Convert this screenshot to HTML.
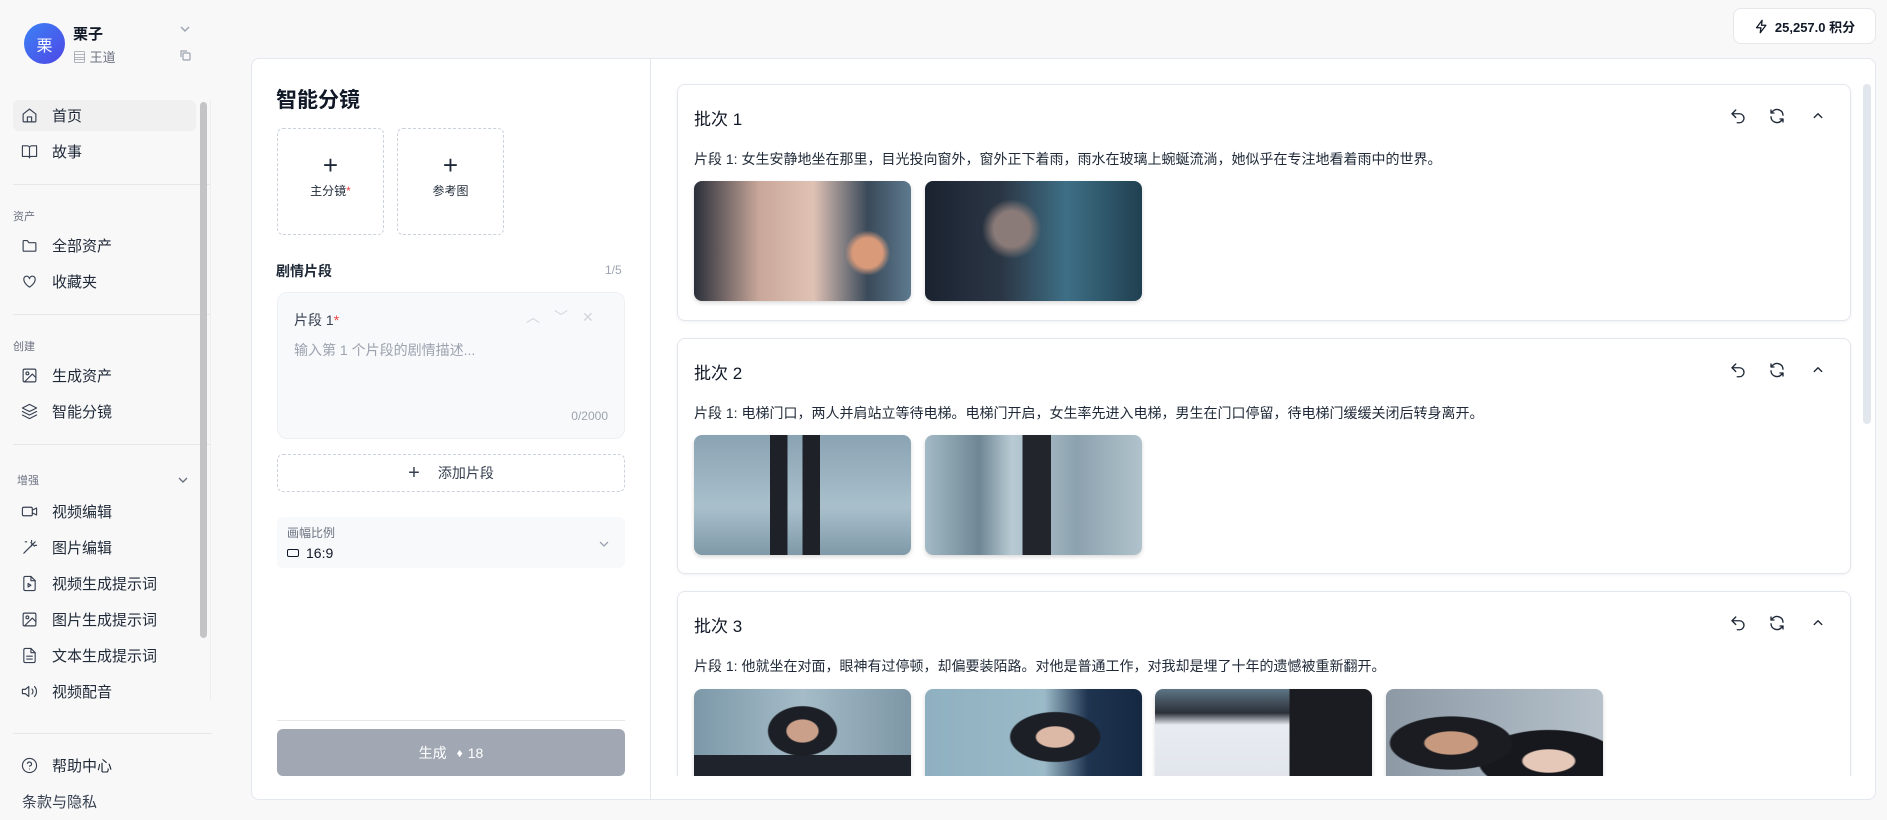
<!DOCTYPE html>
<html style="overflow:hidden;width:1887px;height:820px"><head><meta charset="utf-8"><style>
*{box-sizing:border-box;margin:0;padding:0}
body{width:1887px;height:820px;overflow:hidden;background:#f8f8f9;font-family:"Liberation Sans","Noto Sans CJK SC",sans-serif;color:#1f2937;position:relative}
.abs{position:absolute}
.nav{position:absolute;left:13px;width:183px;height:31px;display:flex;align-items:center;font-size:15px;color:#1f2937}
.nav svg{margin-left:8px;margin-right:14px;width:17px;height:17px;fill:none;stroke:#374151;stroke-width:1.6;stroke-linecap:round;stroke-linejoin:round}
.sec{position:absolute;left:13px;font-size:11px;color:#6b7280}
.sep{position:absolute;left:13px;width:198px;height:1px;background:#e5e7eb}
.card{position:absolute;left:677px;width:1174px;background:#fff;border:1px solid #e3e7ee;border-radius:8px;box-shadow:0 1px 3px rgba(0,0,0,.06)}
.ct{position:absolute;left:16px;top:20px;font-size:17px;color:#111827}
.cs{position:absolute;left:16px;top:64px;font-size:14px;color:#1f2937}
.ic{position:absolute;top:22px;width:18px;height:18px;fill:none;stroke:#1f2937;stroke-width:1.8;stroke-linecap:round;stroke-linejoin:round}
.img{position:absolute;width:217px;height:120px;border-radius:8px;box-shadow:0 2px 4px rgba(0,0,0,.15);overflow:hidden}
</style></head><body>
<div class="abs" style="left:24px;top:23px;width:41px;height:41px;border-radius:50%;background:linear-gradient(135deg,#3b82f6,#4f46e5);color:#fff;font-size:16px;display:flex;align-items:center;justify-content:center">栗</div>
<div class="abs" style="left:73px;top:23px;font-size:15px;font-weight:bold;color:#111827">栗子</div>
<div class="abs" style="left:73px;top:47px;font-size:13px;color:#6b7280">▤ 王道</div>
<svg class="abs" style="left:179px;top:23px" width="12" height="12" viewBox="0 0 12 12" fill="none" stroke="#9ca3af" stroke-width="1.4"><path d="M2 4l4 4 4-4"/></svg>
<svg class="abs" style="left:179px;top:49px" width="12" height="12" viewBox="0 0 12 12" fill="none" stroke="#9ca3af" stroke-width="1.2"><rect x="4" y="4" width="7" height="7" rx="1"/><path d="M2 8V2h6"/></svg>

<div class="nav" style="top:100px;background:#f0f0f1;border-radius:6px"><svg viewBox="0 0 24 24"><path d="M3 10l9-7 9 7v10a1 1 0 01-1 1H4a1 1 0 01-1-1z"/><path d="M9 21v-7h6v7"/></svg>首页</div>
<div class="nav" style="top:136px"><svg viewBox="0 0 24 24"><path d="M2 4h7a3 3 0 013 3v14a2 2 0 00-2-2H2zM22 4h-7a3 3 0 00-3 3v14a2 2 0 012-2h8z"/></svg>故事</div>
<div class="sep" style="top:184px"></div>
<div class="sec" style="top:208px">资产</div>
<div class="nav" style="top:230px"><svg viewBox="0 0 24 24"><path d="M3 6a1 1 0 011-1h5l2 3h9a1 1 0 011 1v10a1 1 0 01-1 1H4a1 1 0 01-1-1z"/></svg>全部资产</div>
<div class="nav" style="top:266px"><svg viewBox="0 0 24 24"><path d="M12 20s-8-5-8-11a4 4 0 018-1 4 4 0 018 1c0 6-8 11-8 11z"/></svg>收藏夹</div>
<div class="sep" style="top:314px"></div>
<div class="sec" style="top:338px">创建</div>
<div class="nav" style="top:360px"><svg viewBox="0 0 24 24"><rect x="3" y="3" width="18" height="18" rx="2"/><circle cx="9" cy="9" r="2"/><path d="M21 15l-5-5L5 21"/></svg>生成资产</div>
<div class="nav" style="top:396px"><svg viewBox="0 0 24 24"><path d="M12 2l10 5-10 5L2 7z"/><path d="M2 12l10 5 10-5M2 17l10 5 10-5"/></svg>智能分镜</div>
<div class="sep" style="top:444px"></div>
<div class="sec" style="top:472px;left:17px">增强</div>
<svg class="abs" style="left:177px;top:474px" width="12" height="12" viewBox="0 0 12 12" fill="none" stroke="#6b7280" stroke-width="1.4"><path d="M2 4l4 4 4-4"/></svg>
<div class="nav" style="top:496px"><svg viewBox="0 0 24 24"><rect x="2" y="6" width="14" height="12" rx="2"/><path d="M16 10l6-3v10l-6-3"/></svg>视频编辑</div>
<div class="nav" style="top:532px"><svg viewBox="0 0 24 24"><path d="M4 20L20 4M15 4V2M15 10V8M20 9h2M8 4H6M14 5l5 5"/></svg>图片编辑</div>
<div class="nav" style="top:568px"><svg viewBox="0 0 24 24"><path d="M14 2H6a2 2 0 00-2 2v16a2 2 0 002 2h12a2 2 0 002-2V8z"/><path d="M14 2v6h6M10 12l4 2.5-4 2.5z"/></svg>视频生成提示词</div>
<div class="nav" style="top:604px"><svg viewBox="0 0 24 24"><rect x="3" y="3" width="18" height="18" rx="2"/><circle cx="9" cy="9" r="2"/><path d="M21 15l-5-5L5 21"/></svg>图片生成提示词</div>
<div class="nav" style="top:640px"><svg viewBox="0 0 24 24"><path d="M14 2H6a2 2 0 00-2 2v16a2 2 0 002 2h12a2 2 0 002-2V8z"/><path d="M14 2v6h6M8 13h8M8 17h8"/></svg>文本生成提示词</div>
<div class="nav" style="top:676px"><svg viewBox="0 0 24 24"><path d="M11 5L6 9H2v6h4l5 4z"/><path d="M15.5 8.5a5 5 0 010 7M19 5a10 10 0 010 14"/></svg>视频配音</div>
<div class="abs" style="left:200px;top:102px;width:7px;height:536px;background:#c4c4c6;border-radius:4px"></div>
<div class="abs" style="left:210px;top:100px;width:1px;height:600px;background:#eceef1"></div>
<div class="sep" style="top:733px;width:199px"></div>
<div class="nav" style="top:750px"><svg viewBox="0 0 24 24"><circle cx="12" cy="12" r="10"/><path d="M9.1 9a3 3 0 015.8 1c0 2-3 3-3 3M12 17h.01"/></svg>帮助中心</div>
<div class="abs" style="left:22px;top:791px;font-size:15px;color:#374151">条款与隐私</div>

<div class="abs" style="left:1733px;top:8px;width:143px;height:36px;background:#fff;border:1px solid #e5e7eb;border-radius:8px;display:flex;align-items:center;justify-content:center;font-size:13px;font-weight:bold;color:#111827"><svg width="15" height="15" viewBox="0 0 24 24" fill="none" stroke="#111827" stroke-width="2" stroke-linejoin="round" style="margin-right:6px"><path d="M13 2L4 14h7l-1 8 9-12h-7z"/></svg>25,257.0 积分</div>

<div class="abs" style="left:251px;top:58px;width:1625px;height:742px;background:#fff;border:1px solid #e3e7ee;border-radius:8px;overflow:hidden"></div>
<div class="abs" style="left:650px;top:58px;width:1px;height:742px;background:#e3e7ee"></div>
<div class="abs" style="left:276px;top:84px;font-size:21px;font-weight:bold;color:#111827">智能分镜</div>
<div class="abs" style="left:277px;top:128px;width:107px;height:107px;border:1px dashed #cbd2dc;border-radius:6px;text-align:center"><div style="font-size:26px;margin-top:23px;line-height:26px;font-weight:300">+</div><div style="font-size:12px;margin-top:4px">主分镜<span style="color:#ef4444">*</span></div></div>
<div class="abs" style="left:397px;top:128px;width:107px;height:107px;border:1px dashed #cbd2dc;border-radius:6px;text-align:center"><div style="font-size:26px;margin-top:23px;line-height:26px;font-weight:300">+</div><div style="font-size:12px;margin-top:4px">参考图</div></div>
<div class="abs" style="left:276px;top:261px;font-size:14px;font-weight:bold;color:#1f2937">剧情片段</div>
<div class="abs" style="left:605px;top:263px;font-size:12px;color:#9ca3af">1/5</div>
<div class="abs" style="left:277px;top:292px;width:348px;height:147px;background:#f8f9fb;border:1px solid #eef0f3;border-radius:10px">
<div class="abs" style="left:16px;top:17px;font-size:14px;color:#374151">片段 1<span style="color:#ef4444">*</span></div>
<div class="abs" style="left:248px;top:14px;font-size:14px;color:#d1d5db;letter-spacing:14px">︿﹀✕</div>
<div class="abs" style="left:16px;top:47px;font-size:14px;color:#9ca3af">输入第 1 个片段的剧情描述...</div>
<div class="abs" style="right:16px;top:116px;font-size:12px;color:#9ca3af">0/2000</div>
</div>
<div class="abs" style="left:277px;top:454px;width:348px;height:38px;border:1px dashed #cbd2dc;border-radius:6px;display:flex;align-items:center;justify-content:center;font-size:14px;color:#374151"><span style="font-size:20px;margin-right:18px;font-weight:300">+</span>添加片段</div>
<div class="abs" style="left:277px;top:517px;width:348px;height:51px;background:#f8f9fb;border-radius:6px">
<div class="abs" style="left:10px;top:7px;font-size:12px;color:#6b7280">画幅比例</div>
<div class="abs" style="left:10px;top:28px;font-size:14px;color:#111827;display:flex;align-items:center"><span style="display:inline-block;width:12px;height:8px;border:1.3px solid #111827;border-radius:2px;margin-right:7px"></span>16:9</div>
<svg class="abs" style="left:321px;top:21px" width="12" height="12" viewBox="0 0 12 12" fill="none" stroke="#9ca3af" stroke-width="1.3"><path d="M2 4l4 4 4-4"/></svg>
</div>
<div class="abs" style="left:277px;top:720px;width:348px;height:1px;background:#e5e7eb"></div>
<div class="abs" style="left:277px;top:729px;width:348px;height:47px;background:#a1a8b3;border-radius:6px;display:flex;align-items:center;justify-content:center;color:#fff;font-size:14px">生成 <span style="margin:0 5px 0 10px;font-size:12px">♦</span>18</div>

<div class="abs" style="left:651px;top:59px;width:1224px;height:717px;overflow:hidden">
<div style="position:absolute;left:-651px;top:-59px;width:1887px;height:776px">
<div class="card" style="top:84px;height:237px">
<div class="ct">批次 1</div>
<svg class="ic" style="left:1051px" viewBox="0 0 24 24"><path d="M9 14L4 9l5-5"/><path d="M4 9h10a6 6 0 010 12h-3"/></svg>
<svg class="ic" style="left:1090px" viewBox="0 0 24 24"><path d="M20 11a8 8 0 00-14-5l-2 2M4 4v4h4M4 13a8 8 0 0014 5l2-2M20 20v-4h-4"/></svg>
<svg class="ic" style="left:1131px" viewBox="0 0 24 24"><path d="M7 14l5-5 5 5"/></svg>
<div class="cs">片段 1: 女生安静地坐在那里，目光投向窗外，窗外正下着雨，雨水在玻璃上蜿蜒流淌，她似乎在专注地看着雨中的世界。</div>
<div class="img" style="left:16px;top:96px;background:radial-gradient(circle at 80% 60%,#d99a7a 0 8%,transparent 12%),linear-gradient(90deg,#2a2f3a 0%,#c9a79a 30%,#e0c2b5 55%,#3a4a5a 80%,#5d7a8e 100%)"></div>
<div class="img" style="left:247px;top:96px;background:radial-gradient(circle at 40% 40%,#8a7b78 0 12%,transparent 20%),linear-gradient(90deg,#1a2230 0%,#2b3644 35%,#3e6f86 65%,#204050 100%)"></div>
</div>
<div class="card" style="top:338px;height:236px">
<div class="ct">批次 2</div>
<svg class="ic" style="left:1051px" viewBox="0 0 24 24"><path d="M9 14L4 9l5-5"/><path d="M4 9h10a6 6 0 010 12h-3"/></svg>
<svg class="ic" style="left:1090px" viewBox="0 0 24 24"><path d="M20 11a8 8 0 00-14-5l-2 2M4 4v4h4M4 13a8 8 0 0014 5l2-2M20 20v-4h-4"/></svg>
<svg class="ic" style="left:1131px" viewBox="0 0 24 24"><path d="M7 14l5-5 5 5"/></svg>
<div class="cs">片段 1: 电梯门口，两人并肩站立等待电梯。电梯门开启，女生率先进入电梯，男生在门口停留，待电梯门缓缓关闭后转身离开。</div>
<div class="img" style="left:16px;top:96px;background:linear-gradient(90deg,transparent 35%,#1e2228 35% 43%,transparent 43% 50%,#1e2228 50% 58%,transparent 58%),linear-gradient(180deg,#8aa3b3 0%,#a9c0cc 60%,#7f99a8 100%)"></div>
<div class="img" style="left:247px;top:96px;background:linear-gradient(90deg,transparent 45%,#22262c 45% 58%,transparent 58%),linear-gradient(90deg,#a3bac6 0%,#6f8794 25%,#b8cbd4 40%,#8ca2ae 70%,#b0c3cc 100%)"></div>
</div>
<div class="card" style="top:591px;height:200px">
<div class="ct">批次 3</div>
<svg class="ic" style="left:1051px" viewBox="0 0 24 24"><path d="M9 14L4 9l5-5"/><path d="M4 9h10a6 6 0 010 12h-3"/></svg>
<svg class="ic" style="left:1090px" viewBox="0 0 24 24"><path d="M20 11a8 8 0 00-14-5l-2 2M4 4v4h4M4 13a8 8 0 0014 5l2-2M20 20v-4h-4"/></svg>
<svg class="ic" style="left:1131px" viewBox="0 0 24 24"><path d="M7 14l5-5 5 5"/></svg>
<div class="cs">片段 1: 他就坐在对面，眼神有过停顿，却偏要装陌路。对他是普通工作，对我却是埋了十年的遗憾被重新翻开。</div>
<div class="img" style="left:16px;top:97px;background:radial-gradient(ellipse at 50% 35%,#caa08a 0 10%,#1c1f26 11% 22%,transparent 23%),linear-gradient(180deg,transparent 55%,#1f232b 55%),linear-gradient(90deg,#7c98a8,#a5bcc8,#7d97a6)"></div>
<div class="img" style="left:247px;top:97px;background:radial-gradient(ellipse at 60% 40%,#dcb8a6 0 10%,#1c1f26 11% 24%,transparent 25%),linear-gradient(90deg,#8fb0c0 0%,#9bbac8 55%,#1f3450 75%,#152842 100%)"></div>
<div class="img" style="left:477px;top:97px;background:linear-gradient(90deg,transparent 62%,#1a1c22 62%),linear-gradient(180deg,#5d7585 0%,#2c3038 20%,#e8ecf2 30%,#dfe4ea 90%,#2b2e34 100%)"></div>
<div class="img" style="left:708px;top:97px;background:radial-gradient(ellipse at 30% 45%,#c79a80 0 12%,#1a1c22 13% 28%,transparent 29%),radial-gradient(ellipse at 75% 60%,#e6c8b8 0 11%,#17181d 12% 30%,transparent 31%),linear-gradient(90deg,#8d9aa6,#b6c1ca)"></div>
</div>
</div>
</div>
<div class="abs" style="left:1863px;top:84px;width:8px;height:340px;background:#e2e7ee;border-radius:4px"></div>
</body></html>
